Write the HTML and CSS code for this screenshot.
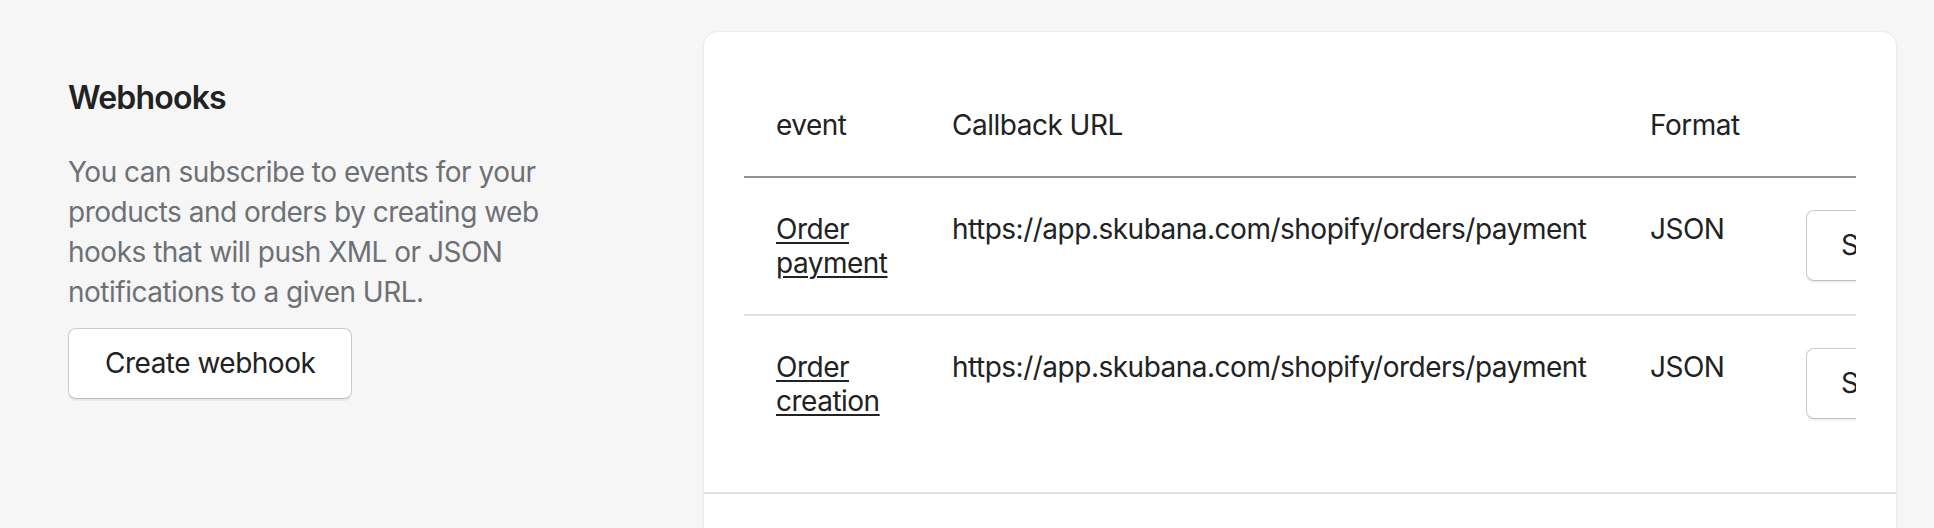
FILE: index.html
```html
<!DOCTYPE html>
<html lang="en">
<head>
    <meta charset="UTF-8">
    <meta name="viewport" content="width=device-width, initial-scale=1.0">
    <title>Webhooks</title>
    <link rel="stylesheet" href="styles.css">
</head>
<body>

<div class="section">
    <div class="annotation">
        <h2 class="title">Webhooks</h2>
        <p class="description">You can subscribe to events for your products and orders by creating web hooks that will push XML or JSON notifications to a given URL.</p>
        <button class="btn btn-create">Create webhook</button>
    </div>

    <div class="card">
        <div class="card-section">
            <div class="table-wrap">
                <table class="hooks">
                    <colgroup>
                        <col class="col-event">
                        <col class="col-url">
                        <col class="col-format">
                        <col class="col-actions">
                    </colgroup>
                    <thead>
                        <tr>
                            <th>event</th>
                            <th>Callback URL</th>
                            <th>Format</th>
                            <th></th>
                        </tr>
                    </thead>
                    <tbody>
                        <tr>
                            <td><a href="#">Order payment</a></td>
                            <td>https://app.skubana.com/shopify/orders/payment</td>
                            <td>JSON</td>
                            <td class="actions"><button class="btn">Send test notification</button></td>
                        </tr>
                        <tr>
                            <td><a href="#">Order creation</a></td>
                            <td>https://app.skubana.com/shopify/orders/payment</td>
                            <td>JSON</td>
                            <td class="actions"><button class="btn">Send test notification</button></td>
                        </tr>
                    </tbody>
                </table>
            </div>
        </div>
        <div class="card-footer"></div>
    </div>
</div>

</body>
</html>
```

FILE: styles.css
```css
body {
    margin: 0;
    background: #f6f6f7;
    color: #202223;
    font-family: Inter, "Noto Sans", sans-serif;
    font-size: 28px;
    line-height: 40px;
    letter-spacing: -0.5px;
    overflow: hidden;
}

.section {
    display: flex;
    gap: 116px;
    padding: 32px 38px 0 68px;
}

.annotation {
    width: 520px;
    flex-shrink: 0;
    padding-top: 42px;
}

.title {
    margin: 0;
    font-size: 32px;
    line-height: 48px;
    font-weight: 600;
    letter-spacing: -0.8px;
}

.description {
    margin: 30px 0 0;
    color: #6d7175;
}

.btn {
    margin-top: 16px;
    padding: 17px 34px;
    background: #fff;
    border: 1px solid #c9cccf;
    border-bottom-color: #babfc3;
    border-radius: 8px;
    box-shadow: 0 2px 0 rgba(0, 0, 0, 0.05);
    color: #202223;
    font-family: inherit;
    font-size: 28px;
    line-height: 35px;
    letter-spacing: -0.5px;
    white-space: nowrap;
}

.btn-create {
    padding: 17px 36px;
}

.card {
    flex: 1;
    min-width: 0;
    background: #fff;
    border-radius: 14px;
    box-shadow: 0 0 2px rgba(0, 0, 0, 0.12), 0 2px 4px rgba(0, 0, 0, 0.04);
}

.card-section {
    padding: 42px 40px 40px;
}

.table-wrap {
    overflow: hidden;
}

.hooks {
    border-collapse: collapse;
    table-layout: fixed;
    width: 1402px;
    line-height: 34px;
}

.col-event { width: 176px; }
.col-url { width: 698px; }
.col-format { width: 156px; }
.col-actions { width: 372px; }

.hooks th {
    padding: 34px 32px;
    text-align: left;
    font-weight: 400;
    border-bottom: 2px solid #8c9196;
}

.hooks td {
    padding: 34px 32px;
    vertical-align: top;
    border-bottom: 2px solid #e1e3e5;
}

.hooks tbody tr:last-child td {
    border-bottom: none;
}

.hooks td.actions {
    padding-top: 32px;
    padding-bottom: 0;
}

.hooks td.actions .btn {
    margin-top: 0;
}

.hooks a {
    color: #202223;
    text-decoration: underline;
    text-decoration-thickness: 2px;
    text-underline-offset: 3px;
}

.card-footer {
    height: 120px;
    border-top: 2px solid #e1e3e5;
}
```
